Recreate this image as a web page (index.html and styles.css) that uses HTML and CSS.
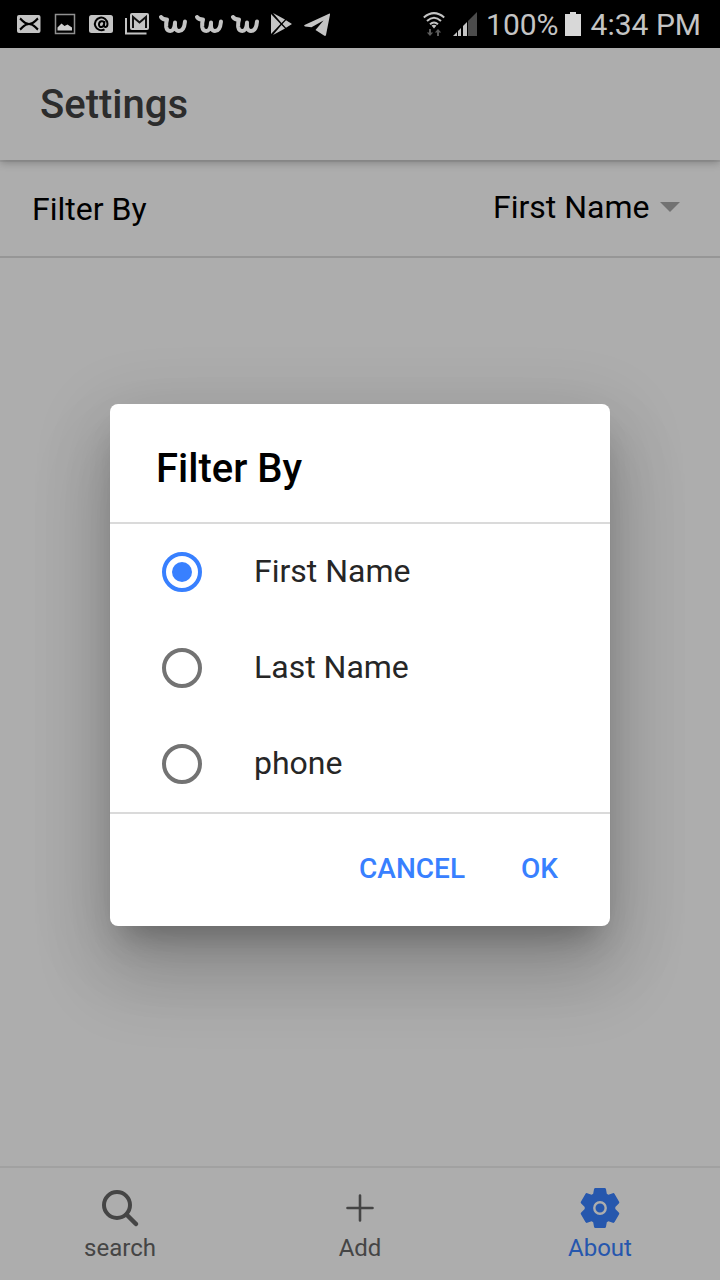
FILE: index.html
```html
<!DOCTYPE html>
<html lang="en">
<head>
<meta charset="utf-8">
<meta name="viewport" content="width=device-width, initial-scale=1">
<title>Settings</title>
<link rel="stylesheet" href="styles.css">
</head>
<body>
<svg class="sprite" aria-hidden="true">
  <symbol id="wish" viewBox="0 0 36 48">
    <path d="M6 17c1 2 3.500 2.500 6 2.500-1 3-1 5-.8 7.500.5 3 2 4 4 4 3 0 4.500-3 4.800-8.500-.3 5.500.5 8.500 4 8.500 4 0 5.500-4 6-9.500" fill="none" stroke="#c4c4c4" stroke-width="4" stroke-linecap="round" stroke-linejoin="round"/>
  </symbol>
</svg>

<div class="statusbar">
  <div class="notices" aria-hidden="true">
    <svg class="notice" viewBox="0 0 36 48"><rect x="6" y="15" width="23.500" height="18" rx="2" fill="#c4c4c4"/><path d="M9 18.500c3 2 4 5.500 9 5.500s6-3.500 9-5.500M9 29.500c3-2 4-5.500 9-5.500s6 3.500 9 5.500" fill="none" stroke="#000" stroke-width="2.200"/></svg>
    <svg class="notice" viewBox="0 0 36 48"><rect x="8.500" y="14.500" width="19" height="19" fill="none" stroke="#909090" stroke-width="1.500"/><path d="M10.500 30.500v-3l4-4 3 2.500 3-1.500 4.500 3v3z" fill="#d0d0d0"/></svg>
    <svg class="notice" viewBox="0 0 36 48"><rect x="6" y="15" width="24" height="18" rx="2.500" fill="#c4c4c4"/><path d="M21.500 29.300a6.300 6.300 0 1 1 3-5.500c0 4.200-3.700 4-3.500 1.200l.5-4M21 24c-.5 4-5 4-5 .5s4.500-4.500 5-1.500" fill="none" stroke="#000" stroke-width="2"/></svg>
    <svg class="notice" viewBox="0 0 36 48"><path d="M7 18v15.500h20.500" fill="none" stroke="#c4c4c4" stroke-width="2"/><rect x="11" y="13" width="19" height="17" rx="2" fill="#c4c4c4"/><path d="M14 28V17l6.500 5.500L27 17v11" fill="none" stroke="#111" stroke-width="2"/></svg>
    <svg class="notice"><use href="#wish"/></svg>
    <svg class="notice"><use href="#wish"/></svg>
    <svg class="notice"><use href="#wish"/></svg>
    <svg class="notice" viewBox="0 0 36 48"><path d="M8 14v20l9.500-10zM10 13l8.500 10 3.500-3.500zM10 35l8.500-10 3.500 3.500zM19.500 24l3.500-3.700 6 3.700-6 3.700z" fill="#c4c4c4"/></svg>
    <svg class="notice" viewBox="0 0 36 48"><path d="M5.500 25 30 13.700q1.300-.4 1 1L27 35q-.5 1.500-2 .6L16.500 30l8-9.500-12 6.800L6 26.500q-1.500-.6-.5-1.500z" fill="#c4c4c4"/></svg>
  </div>
  <div class="system">
    <svg class="wifi" viewBox="0 0 22 24" role="img" aria-label="Wi-Fi"><g fill="none" stroke="#c4c4c4" stroke-width="2"><path d="M.8 5.500Q11-3.200 21.200 5.500M4 9q7-6.500 14 0M7 12.300q4-3.600 8 0"/></g><path d="M8.500 13.500q2.500-1.500 5 0L11 16.500z" fill="#c4c4c4"/><path d="M6 17h2v3.500h2.200L7 24l-3.200-3.500H6zM14 24h2v-3.500h2.200L15 17l-3.200 3.500H14z" fill="#5c5c5c"/></svg>
    <svg class="signal" viewBox="0 0 24 24" role="img" aria-label="Signal"><path d="M15 9 24 0v24h-9z" fill="#4c4c4c"/><path d="M0 24 4 20v4zM5 19l3-3v8H5zM9 15l4-4v13H9zM10 14 14 10v14h-4z" fill="#c4c4c4"/><path d="M9.500 13v11" stroke="#000"/></svg>
    <span class="percent">100%</span>
    <svg class="battery" viewBox="0 0 16 24" role="img" aria-label="Battery full"><path d="M0 2h5V0h6v2h5v22H0z" fill="#d8d8d8"/></svg>
    <span class="clock">4:34 PM</span>
  </div>
</div>

<div class="app">
  <header class="toolbar"><h1 class="toolbar-title">Settings</h1></header>
  <main class="content">
    <div class="setting">
      <label class="setting-label" for="filter">Filter By</label>
      <div class="picker">
        <select class="picker-select" id="filter">
          <option selected>First Name</option>
          <option>Last Name</option>
          <option>phone</option>
        </select>
        <span class="picker-arrow"></span>
      </div>
    </div>
  </main>
  <nav class="tabs">
    <button class="tab" type="button">
      <svg class="tab-icon" viewBox="0 0 40 40"><circle cx="17" cy="17" r="13" fill="none" stroke="currentColor" stroke-width="4"/><path d="m27 27 9 9" stroke="currentColor" stroke-width="4.500" stroke-linecap="round"/></svg>
      search
    </button>
    <button class="tab" type="button">
      <svg class="tab-icon" viewBox="0 0 40 40"><path d="M20 7.500v25M7.500 20h25" stroke="currentColor" stroke-width="2.600" stroke-linecap="round"/></svg>
      Add
    </button>
    <button class="tab tab-active" type="button">
      <svg class="tab-icon" viewBox="0 0 40 40"><path d="M15.500 0h9q1.300 0 1.500 1.300l.8 4.400 1.600 1 4.400-1.500q1.100-.4 1.800.7l4.500 7.800q.6 1-.3 1.800L35.300 19v2l3.500 3.500q.9.800.3 1.800l-4.500 7.800q-.7 1.100-1.800.7l-4.400-1.500-1.600 1-.8 4.400q-.2 1.300-1.500 1.300h-9q-1.300 0-1.500-1.300l-.8-4.400-1.600-1-4.400 1.500q-1.100.4-1.800-.7L.9 26.300q-.6-1 .3-1.800L4.700 21v-2l-3.500-3.500q-.9-.8-.3-1.800l4.500-7.800q.7-1.100 1.800-.7l4.400 1.500 1.600-1 .8-4.400Q14.200 0 15.500 0z" fill="currentColor"/><circle cx="20" cy="20" r="5.700" fill="none" stroke="#fff" stroke-width="2.400"/></svg>
      About
    </button>
  </nav>

  <div class="backdrop">
    <form class="alert" role="dialog" aria-modal="true" aria-labelledby="alert-title">
      <h2 class="alert-title" id="alert-title">Filter By</h2>
      <div class="options" role="radiogroup" aria-labelledby="alert-title">
        <label class="option"><input class="option-radio" type="radio" name="field" checked><span class="option-text">First Name</span></label>
        <label class="option"><input class="option-radio" type="radio" name="field"><span class="option-text">Last Name</span></label>
        <label class="option"><input class="option-radio" type="radio" name="field"><span class="option-text">phone</span></label>
      </div>
      <div class="actions">
        <button class="action" type="button">CANCEL</button>
        <button class="action" type="button">OK</button>
      </div>
    </form>
  </div>
</div>
</body>
</html>
```

FILE: styles.css
```css
* {
  box-sizing: border-box;
}

body {
  display: flex;
  flex-direction: column;
  min-height: 100vh;
  margin: 0;
  background: #fff;
  font-family: Roboto, "Liberation Sans", sans-serif;
}

button,
select {
  border: 0;
  background: none;
  font-family: inherit;
}

.sprite {
  display: none;
}

.statusbar {
  display: flex;
  justify-content: space-between;
  height: 48px;
  padding: 0 19px 0 11px;
  background: #000;
  color: #c4c4c4;
  font-size: 30px;
}

.notices,
.system {
  display: flex;
  align-items: center;
}

.notice {
  width: 36px;
  height: 48px;
}

.wifi {
  width: 22px;
  height: 24px;
}

.signal {
  width: 24px;
  height: 24px;
  margin: 0 9px 0 8px;
}

.battery {
  width: 16px;
  height: 24px;
  margin: 0 10px 0 6px;
}

.app {
  position: relative;
  display: flex;
  flex: 1;
  flex-direction: column;
}

.toolbar {
  display: flex;
  align-items: center;
  min-height: 112px;
  padding: 0 40px;
  box-shadow: 0 2px 0 rgba(0, 0, 0, 0.06), 0 3px 8px rgba(0, 0, 0, 0.24);
}

.toolbar-title {
  margin: 0;
  color: #424242;
  font-size: 40px;
  font-weight: 500;
}

.content {
  flex: 1;
}

.setting {
  display: flex;
  align-items: center;
  justify-content: space-between;
  min-height: 98px;
  padding: 2px 40px 0 32px;
  border-bottom: 2px solid #dedede;
  font-size: 32px;
}

.picker {
  display: flex;
  align-items: center;
  gap: 10px;
  padding-bottom: 4px;
}

.picker-select {
  padding: 0;
  appearance: none;
  color: #000;
  font-size: 32px;
}

.picker-arrow {
  border: 10px solid transparent;
  border-top-color: #a9a9a9;
  border-bottom: 0;
}

.tabs {
  display: flex;
  min-height: 114px;
  border-top: 2px solid #ededed;
}

.tab {
  display: flex;
  flex: 1;
  flex-direction: column;
  align-items: center;
  gap: 4px;
  padding: 20px 0 16px;
  color: #666;
  font-size: 24px;
  line-height: 32px;
}

.tab-active {
  color: #3880ff;
}

.tab-icon {
  width: 40px;
  height: 40px;
}

.backdrop {
  position: absolute;
  inset: 0;
  display: flex;
  align-items: center;
  justify-content: center;
  padding: 2px 20px 0;
  background: rgba(0, 0, 0, 0.32);
}

.alert {
  width: 100%;
  max-width: 500px;
  border-radius: 8px;
  background: #fff;
  box-shadow:
    0 22px 30px -14px rgba(0, 0, 0, 0.26),
    0 48px 76px 6px rgba(0, 0, 0, 0.14),
    0 18px 76px 8px rgba(0, 0, 0, 0.12);
}

.alert-title {
  margin: 0;
  padding: 41px 46px 29px;
  font-size: 40px;
  font-weight: 500;
  line-height: 48px;
}

.options {
  border: solid #dadada;
  border-width: 2px 0;
}

.option {
  display: flex;
  align-items: center;
  gap: 52px;
  height: 96px;
  padding: 0 52px;
  color: #262626;
  font-size: 32px;
}

.option-text {
  padding-bottom: 2px;
}

.option-radio {
  display: grid;
  place-items: center;
  width: 40px;
  height: 40px;
  margin: 0;
  appearance: none;
  border: 4px solid #737373;
  border-radius: 50%;
}

.option-radio:checked {
  border-color: #3880ff;
}

.option-radio:checked::before {
  width: 20px;
  height: 20px;
  border-radius: 50%;
  background: #3880ff;
  content: "";
}

.actions {
  display: flex;
  justify-content: flex-end;
  padding: 17px 16px 19px;
}

.action {
  margin-right: 16px;
  padding: 20px;
  color: #3880ff;
  font-size: 28px;
  font-weight: 500;
  line-height: 36px;
}
```
